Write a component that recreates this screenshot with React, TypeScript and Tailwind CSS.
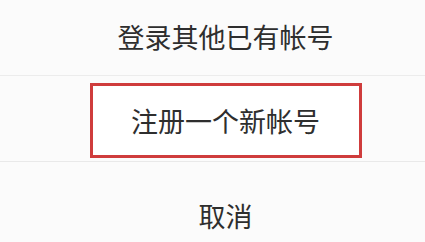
export default function App() {
  const font = "font-['Noto_Sans_CJK_SC','Noto_Sans',sans-serif]";
  return (
    <div className={`w-[425px] h-[242px] overflow-hidden bg-[#fbfbfb] text-[#2e2e2e] ${font}`}>
      {/* other account */}
      <div className="h-[76px] flex items-center justify-center pl-[26px] border-b border-[#ececec]">
        <span className="text-[27px] leading-none pb-[3px]">登录其他已有帐号</span>
      </div>

      {/* register, highlighted */}
      <div className="h-[86px] flex items-center justify-center pl-[26px] pt-[3px] border-b border-[#e9e9e9]">
        <div className="w-[272px] h-[75px] border-[3px] border-[#cf3c3c] bg-white flex items-center justify-center">
          <span className="text-[27px] leading-none">注册一个新帐号</span>
        </div>
      </div>

      {/* cancel */}
      <div className="flex justify-center pl-[26px] pt-[40px]">
        <span className="text-[27px] leading-none">取消</span>
      </div>
    </div>
  );
}
